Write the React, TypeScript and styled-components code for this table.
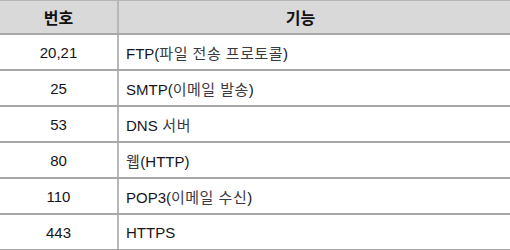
import styled, { createGlobalStyle } from "styled-components";

const GlobalStyle = createGlobalStyle`
  body {
    margin: 0;
    background: #ffffff;
    font-family: "Liberation Sans", "Noto Sans CJK KR", sans-serif;
  }
`;

const ports = [
  { num: "20,21", desc: "FTP(파일 전송 프로토콜)" },
  { num: "25", desc: "SMTP(이메일 발송)" },
  { num: "53", desc: "DNS 서버" },
  { num: "80", desc: "웹(HTTP)" },
  { num: "110", desc: "POP3(이메일 수신)" },
  { num: "443", desc: "HTTPS" },
];

const Table = styled.table`
  width: 510px;
  border-collapse: collapse;
  table-layout: fixed;
  border-top: 1px solid #b5b5b5;
`;

const HeadCell = styled.th<{ $padRight?: number }>`
  height: 32px;
  padding: 0 ${(p) => p.$padRight ?? 0}px 0 0;
  background: #d9d9d9;
  border-bottom: 2px solid #a8a8a8;
  font-size: 16px;
  font-weight: bold;
  color: #111111;
  text-align: center;
  &:first-child {
    width: 117px;
    border-right: 2px solid #b8b8b8;
  }
`;

const Cell = styled.td<{ $center?: boolean }>`
  height: 34px;
  padding: 0 0 0 ${(p) => (p.$center ? 0 : 7)}px;
  border-bottom: 2px solid #a8a8a8;
  font-size: 15px;
  color: #161620;
  text-align: ${(p) => (p.$center ? "center" : "left")};
  &:first-child {
    border-right: 2px solid #b8b8b8;
  }
`;

const Kor = styled.span`
  color: #3a3a44;
  letter-spacing: 0.5px;
`;

function splitDesc(text: string) {
  // 한글만 살짝 옅게
  return text.split(/([가-힣 ]+)/).map((part, i) =>
    /[가-힣]/.test(part) ? <Kor key={i}>{part}</Kor> : <span key={i}>{part}</span>
  );
}

export default function App() {
  return (
    <>
      <GlobalStyle />
      <Table>
        <thead>
          <tr>
            <HeadCell>번호</HeadCell>
            <HeadCell $padRight={28}>기능</HeadCell>
          </tr>
        </thead>
        <tbody>
          {ports.map((p) => (
            <tr key={p.num}>
              <Cell $center>{p.num}</Cell>
              <Cell>{splitDesc(p.desc)}</Cell>
            </tr>
          ))}
        </tbody>
      </Table>
    </>
  );
}
